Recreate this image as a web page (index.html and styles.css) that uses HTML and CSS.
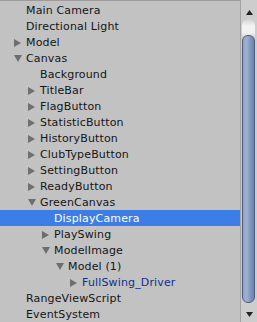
FILE: index.html
```html
<!DOCTYPE html>
<html>
<head>
<meta charset="utf-8">
<link rel="stylesheet" href="styles.css">
</head>
<body>
<div class="panel">
  <div class="tree">
    <div class="row l0"><span class="arrow"></span><span class="label">Main Camera</span></div>
    <div class="row l0"><span class="arrow"></span><span class="label">Directional Light</span></div>
    <div class="row l0"><span class="arrow"><svg width="7" height="8" viewBox="0 0 7 8"><path d="M0 0L7 4L0 8Z"/></svg></span><span class="label">Model</span></div>
    <div class="row l0"><span class="arrow"><svg width="8" height="7" viewBox="0 0 8 7"><path d="M0 0L8 0L4 7Z"/></svg></span><span class="label">Canvas</span></div>
    <div class="row l1"><span class="arrow"></span><span class="label">Background</span></div>
    <div class="row l1"><span class="arrow"><svg width="7" height="8" viewBox="0 0 7 8"><path d="M0 0L7 4L0 8Z"/></svg></span><span class="label">TitleBar</span></div>
    <div class="row l1"><span class="arrow"><svg width="7" height="8" viewBox="0 0 7 8"><path d="M0 0L7 4L0 8Z"/></svg></span><span class="label">FlagButton</span></div>
    <div class="row l1"><span class="arrow"><svg width="7" height="8" viewBox="0 0 7 8"><path d="M0 0L7 4L0 8Z"/></svg></span><span class="label">StatisticButton</span></div>
    <div class="row l1"><span class="arrow"><svg width="7" height="8" viewBox="0 0 7 8"><path d="M0 0L7 4L0 8Z"/></svg></span><span class="label">HistoryButton</span></div>
    <div class="row l1"><span class="arrow"><svg width="7" height="8" viewBox="0 0 7 8"><path d="M0 0L7 4L0 8Z"/></svg></span><span class="label">ClubTypeButton</span></div>
    <div class="row l1"><span class="arrow"><svg width="7" height="8" viewBox="0 0 7 8"><path d="M0 0L7 4L0 8Z"/></svg></span><span class="label">SettingButton</span></div>
    <div class="row l1"><span class="arrow"><svg width="7" height="8" viewBox="0 0 7 8"><path d="M0 0L7 4L0 8Z"/></svg></span><span class="label">ReadyButton</span></div>
    <div class="row l1"><span class="arrow"><svg width="8" height="7" viewBox="0 0 8 7"><path d="M0 0L8 0L4 7Z"/></svg></span><span class="label">GreenCanvas</span></div>
    <div class="row l2 selected"><span class="arrow"></span><span class="label">DisplayCamera</span></div>
    <div class="row l2"><span class="arrow"><svg width="7" height="8" viewBox="0 0 7 8"><path d="M0 0L7 4L0 8Z"/></svg></span><span class="label">PlaySwing</span></div>
    <div class="row l2"><span class="arrow"><svg width="8" height="7" viewBox="0 0 8 7"><path d="M0 0L8 0L4 7Z"/></svg></span><span class="label">ModelImage</span></div>
    <div class="row l3"><span class="arrow"><svg width="8" height="7" viewBox="0 0 8 7"><path d="M0 0L8 0L4 7Z"/></svg></span><span class="label">Model (1)</span></div>
    <div class="row l4 prefab"><span class="arrow"><svg width="7" height="8" viewBox="0 0 7 8"><path d="M0 0L7 4L0 8Z"/></svg></span><span class="label">FullSwing_Driver</span></div>
    <div class="row l0"><span class="arrow"></span><span class="label">RangeViewScript</span></div>
    <div class="row l0"><span class="arrow"></span><span class="label">EventSystem</span></div>
  </div>
  <div class="scrollbar">
    <div class="sb-btn up"><svg width="7" height="5" viewBox="0 0 7 5"><path d="M3.5 0L7 5L0 5Z"/></svg></div>
    <div class="sb-track">
      <div class="sb-cap"></div>
      <div class="sb-thumb"></div>
    </div>
    <div class="sb-btn down"><svg width="7" height="5" viewBox="0 0 7 5"><path d="M0 0L7 0L3.5 5Z"/></svg></div>
  </div>
</div>
</body>
</html>
```
FILE: styles.css
```css
html, body {
  margin: 0;
  padding: 0;
  background: #c2c2c2;
}
.panel {
  display: flex;
  width: 257px;
  height: 322px;
  overflow: hidden;
  font-family: "DejaVu Sans", Verdana, sans-serif;
  font-size: 11px;
  letter-spacing: 0.15px;
  color: #151515;
}
.tree {
  flex: 1;
  border-top: 1px solid #9c9c9c;
  padding-top: 1px;
  box-sizing: border-box;
  height: 322px;
}
.row {
  display: flex;
  align-items: center;
  height: 16px;
  line-height: 16px;
  white-space: nowrap;
}
.label {
  padding-top: 2px;
  line-height: 14px;
}
.row.l0 { padding-left: 14px; }
.row.l1 { padding-left: 28px; }
.row.l2 { padding-left: 42px; }
.row.l3 { padding-left: 56px; }
.row.l4 { padding-left: 70px; }
.arrow {
  width: 12px;
  flex: none;
  display: flex;
  align-items: center;
  padding-top: 1px;
}
.arrow svg {
  display: block;
  fill: #6e6e6e;
}
.selected {
  background: #3d7ee6;
  color: #fff;
}
.prefab {
  color: #0f2f8f;
}
.scrollbar {
  width: 17px;
  flex: none;
  display: flex;
  flex-direction: column;
  background: #cdcdcd;
  border-left: 1px solid #a3a3a3;
  box-sizing: border-box;
}
.sb-btn {
  display: flex;
  justify-content: center;
  flex: none;
}
.sb-btn svg { display: block; fill: #222; }
.sb-btn.up { height: 19px; padding-top: 10px; box-sizing: border-box; }
.sb-btn.down { height: 19px; padding-top: 9px; box-sizing: border-box; }
.sb-track {
  flex: 1;
  display: flex;
  flex-direction: column;
  padding: 0 2px 0 1px;
}
.sb-cap {
  height: 17px;
  flex: none;
  border-radius: 6px 6px 0 0;
  background: linear-gradient(to bottom, #d0d0d0, #f4f4f4 40%, #f0f0f0 80%, #dcdcdc);
}
.sb-thumb {
  flex: 1;
  margin-top: -1px;
  border: 1px solid #4e5f80;
  border-radius: 6px;
  background: linear-gradient(to right, #8da3c6, #9fb3d2 30%, #7e95bb 70%, #6b82aa);
}
```
